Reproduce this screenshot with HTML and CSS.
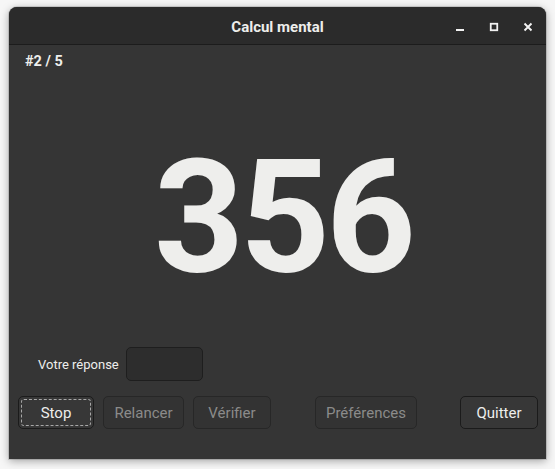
FILE: index.html
```html
<!DOCTYPE html>
<html lang="fr">
<head>
<meta charset="utf-8">
<title>Calcul mental</title>
<link rel="stylesheet" href="styles.css">
</head>
<body>
<div class="window">
  <header class="titlebar">
    <span class="title">Calcul mental</span>
    <div class="controls">
      <span class="ctl"><svg width="10" height="10" viewBox="0 0 10 10"><rect x="1" y="7" width="8" height="2" fill="#f2f2f2"/></svg></span>
      <span class="ctl"><svg width="10" height="10" viewBox="0 0 10 10"><rect x="1.75" y="1.75" width="6.5" height="6.5" fill="none" stroke="#f2f2f2" stroke-width="1.8"/></svg></span>
      <span class="ctl"><svg width="10" height="10" viewBox="0 0 10 10"><path d="M1.5 1.5 L8.5 8.5 M8.5 1.5 L1.5 8.5" stroke="#f2f2f2" stroke-width="1.9"/></svg></span>
    </div>
  </header>
  <main class="content">
    <div class="counter">#2 / 5</div>
    <div class="number-area"><span class="number">356</span></div>
    <div class="answer-row">
      <label class="answer-label">Votre réponse</label>
      <input class="entry" type="text">
    </div>
    <div class="button-row">
      <button class="btn focus">Stop</button>
      <button class="btn disabled">Relancer</button>
      <button class="btn disabled">Vérifier</button>
      <button class="btn disabled prefs">Préférences</button>
      <button class="btn quit">Quitter</button>
    </div>
  </main>
</div>
</body>
</html>
```

FILE: styles.css
```css
* { box-sizing: border-box; }
html, body { margin: 0; padding: 0; }
body {
  width: 555px;
  height: 469px;
  background: #f6f6f6;
  font-family: Roboto, "Noto Sans", sans-serif;
  overflow: hidden;
  padding: 7px 9px 0 9px;
}
.window {
  width: 537px;
  height: 452px;
  border-radius: 8px 8px 0 0;
  background: #353535;
  box-shadow: 0 2px 8px rgba(0,0,0,0.35), 0 0 0 1px rgba(0,0,0,0.12);
  display: flex;
  flex-direction: column;
  overflow: hidden;
}
.titlebar {
  height: 38px;
  flex: none;
  background: #2b2b2b;
  border-bottom: 1px solid #1c1c1c;
  position: relative;
  display: flex;
  align-items: center;
  justify-content: center;
}
.title {
  color: #eeeeec;
  font-weight: 700;
  font-size: 15px;
  margin-top: 2px;
}
.controls {
  position: absolute;
  right: 1px;
  top: 1px;
  height: 37px;
  display: flex;
  align-items: center;
}
.ctl {
  width: 34px;
  height: 24px;
  display: flex;
  align-items: center;
  justify-content: center;
}
.ctl svg { display: block; }
.content {
  flex: 1;
  display: flex;
  flex-direction: column;
  padding: 7px 8px 30px 9px;
}
.counter {
  color: #eeeeec;
  font-weight: 700;
  font-size: 14.5px;
  padding-left: 7px;
  line-height: 18px;
  margin-top: 1px;
}
.number-area {
  flex: 1;
  display: flex;
  align-items: center;
  justify-content: center;
}
.number {
  color: #eeeeec;
  font-weight: 700;
  font-size: 157px;
  letter-spacing: -4px;
  line-height: 1;
  margin-top: 16px;
  margin-left: 10px;
}
.answer-row {
  display: flex;
  align-items: center;
  padding-left: 20px;
  gap: 7px;
  height: 34px;
  margin-bottom: 15px;
}
.answer-label {
  color: #eeeeec;
  font-size: 13px;
}
.entry {
  width: 77px;
  height: 34px;
  background: #2d2d2d;
  border: 1px solid #1e1e1e;
  border-radius: 5px;
  outline: none;
}
.button-row {
  display: flex;
  align-items: center;
  height: 33px;
}
.btn {
  height: 33px;
  font-family: Roboto, "Noto Sans", sans-serif;
  font-size: 15px;
  color: #eeeeec;
  background: #373737;
  border: 1px solid #1b1b1b;
  border-radius: 5px;
  padding: 0 8px;
  margin-right: 9px;
  position: relative;
}
.btn.focus { width: 76px; }
.btn.focus::after {
  content: "";
  position: absolute;
  inset: 2px;
  border: 1px dashed #a8a8a8;
  border-radius: 3px;
}
.btn.disabled {
  color: #8b8b8a;
  background: #333333;
  border-color: #272727;
}
.btn.disabled:nth-child(2) { width: 81px; }
.btn.disabled:nth-child(3) { width: 78px; margin-right: 44px; }
.btn.prefs { width: 102px; margin-right: 0; }
.btn.quit { width: 78px; margin-left: auto; margin-right: 0; }
```
